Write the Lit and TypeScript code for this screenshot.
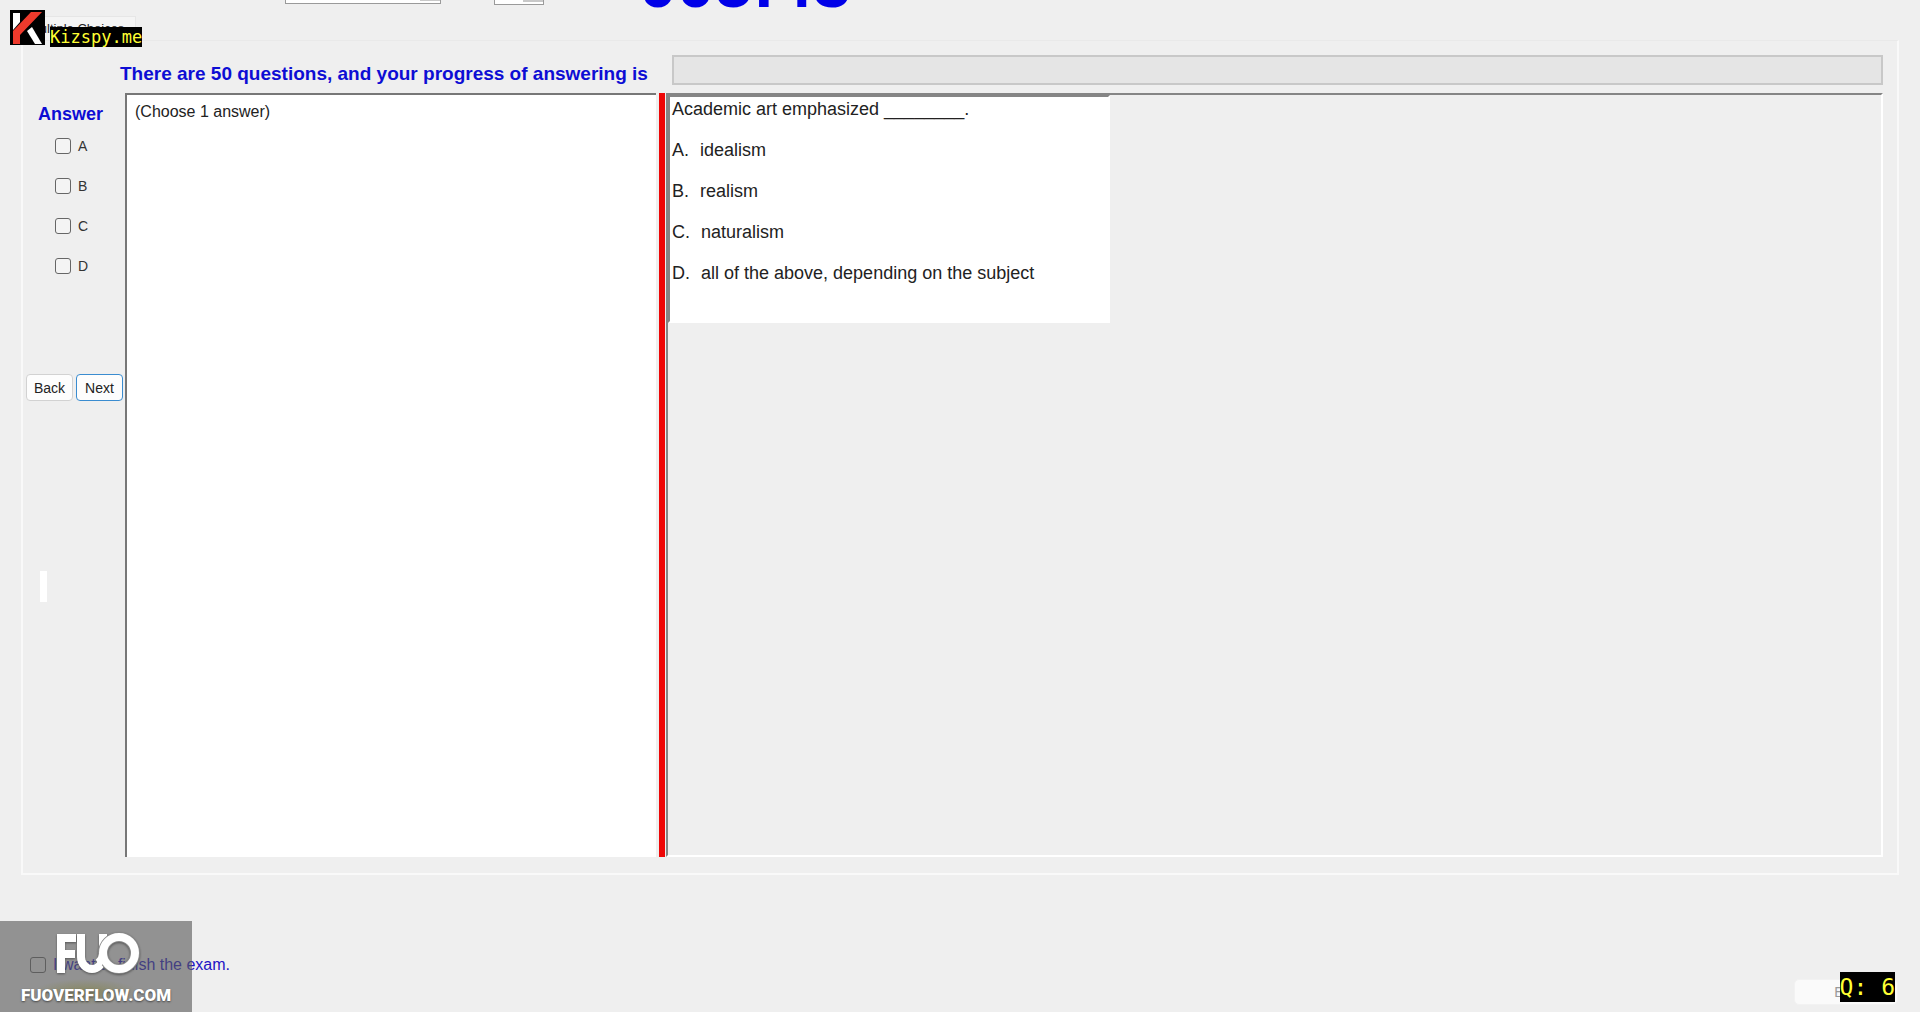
import { LitElement, html, css } from "lit";
import { customElement, state } from "lit/decorators.js";

@customElement("app-root")
export class AppRoot extends LitElement {
  @state() private options = ["A", "B", "C", "D"];
  @state() private choices = [
    ["A.", "idealism"],
    ["B.", "realism"],
    ["C.", "naturalism"],
    ["D.", "all of the above, depending on the subject"],
  ];

  static styles = css`
    * { box-sizing: border-box; }
    :host {
      display: flex;
      flex-direction: column;
      position: relative;
      min-height: 100vh;
      overflow: hidden;
      background: #efefef;
      color: #222;
      font-family: "Liberation Sans", Arial, sans-serif;
      font-size: 16px;
    }
    .top {
      display: flex;
      align-items: flex-end;
      height: 12px;
      padding-left: 285px;
      flex: none;
    }
    .drop {
      appearance: none;
      height: 24px;
      border: 1px solid #9a9a9a;
      border-radius: 0;
      margin: 0 0 8px;
      background: linear-gradient(#c8c8c8, #c8c8c8) right 0 bottom 2px / 20px 20px no-repeat #fff;
    }
    .subject { width: 156px; margin-right: 53px; }
    .size { width: 50px; margin-bottom: 7px; }
    .timer {
      margin-left: 95px;
      font-size: 68px;
      line-height: 64px;
      font-weight: bold;
      color: #0000e8;
      margin-bottom: -3px;
    }
    .tabs { display: flex; height: 28px; padding: 4px 0 0 24px; flex: none; }
    .tab {
      height: 24px;
      width: 112px;
      border: 1px solid #e6e6e6;
      border-bottom: 0;
      background: #f4f4f4;
      padding: 0 0 0 4px;
      font: 13px/22px "Liberation Sans", Arial, sans-serif;
      text-align: left;
      white-space: nowrap;
      color: #222;
    }
    .panel {
      flex: 1;
      margin: 0 21px;
      border: 2px solid #f9f9f9;
      border-top: 1px solid #e9e9e9;
      display: grid;
      grid-template-columns: 102px 1fr;
      grid-template-rows: 52px 1fr;
      padding: 0 14px 16px 0;
    }
    .status { grid-column: 1 / 3; display: flex; padding: 14px 0 8px 97px; gap: 24px; }
    .heading { margin: 0; font-size: 19px; line-height: 38px; font-weight: bold; color: #0d0dd4; white-space: nowrap; }
    .progress { flex: 1; height: 30px; border: 2px solid #c8c8c8; background: #e5e5e5; }
    .side { display: flex; flex-direction: column; align-items: stretch; }
    .side fieldset { border: 0; margin: 0; padding: 9px 0 0 15px; min-width: 0; }
    .side legend { float: left; width: 100%; padding: 0; font-size: 18px; line-height: 24px; font-weight: bold; color: #0d0dd4; }
    .opt { clear: both; display: flex; align-items: center; gap: 7px; height: 40px; padding-left: 17px; font-size: 14px; color: #333; }
    .box {
      appearance: none;
      width: 16px;
      height: 16px;
      margin: 0;
      border: 1px solid #666;
      border-radius: 3px;
      background: #f4f4f4;
      flex: none;
    }
    .finish .box { background: transparent; }
    .nav { display: flex; gap: 3px; padding: 88px 2px 0 3px; }
    .nav button {
      flex: 1;
      height: 27px;
      padding: 0;
      border: 1px solid #d2d2d2;
      border-radius: 4px;
      background: #fdfdfd;
      font: 14px "Liberation Sans", Arial, sans-serif;
      color: #222;
    }
    .nav .next { border-color: #3a8cd0; }
    .mark { width: 7px; height: 31px; margin: 170px 0 0 17px; background: #fff; }
    .split { display: grid; grid-template-columns: 531px 10px 1fr; }
    .note { background: #fff; border: solid #777; border-width: 2px 0 0 2px; padding: 7px 8px; line-height: 20px; }
    .bar { background: #ee0606; margin: 0 1px 0 3px; }
    .right { border: 2px solid; border-color: #858585 #fff #fff #858585; display: flex; align-items: flex-start; }
    .card {
      width: 442px;
      height: 228px;
      border: 2px solid;
      border-color: #858585 #fff #fff #858585;
      background: #fff;
      padding: 0 0 0 2px;
      font-size: 18px;
    }
    .card p { margin: 0; line-height: 25px; }
    .card ol { margin: 0; padding: 0; list-style: none; }
    .card li { padding-top: 16px; line-height: 25px; display: flex; gap: 11px; }
    .foot {
      display: flex;
      justify-content: space-between;
      align-items: flex-start;
      height: 137px;
      padding: 79px 22px 0 30px;
      flex: none;
    }
    .finish { display: flex; gap: 7px; align-items: center; color: #2213c5; font-size: 16px; line-height: 22px; }
    .exit {
      width: 104px;
      height: 26px;
      margin-top: 25px;
      border: 1px solid #f2f2f2;
      border-radius: 5px;
      background: #fafafa;
      color: #999;
      font: 14px "Liberation Sans", Arial, sans-serif;
    }
    .kz { position: absolute; left: 10px; top: 10px; width: 35px; height: 35px; }
    .kzname {
      position: absolute;
      left: 50px;
      top: 27px;
      background: #000;
      color: #ff3;
      font: 17px/20px "DejaVu Sans Mono", monospace;
    }
    .fuo {
      position: absolute;
      left: 0;
      bottom: 0;
      width: 192px;
      height: 91px;
      background:
        radial-gradient(closest-side, rgba(120, 120, 20, 0.4), transparent) 34px 58px / 104px 26px no-repeat,
        rgba(88, 88, 88, 0.62);
    }
    .fuo svg { position: absolute; left: 52px; top: 8px; width: 92px; height: 54px; filter: drop-shadow(0 1px 1px #555); }
    .fuotext {
      position: absolute;
      left: 0;
      right: 0;
      top: 62px;
      text-align: center;
      color: #fff;
      font: 900 17px/24px Roboto, "Liberation Sans", sans-serif;
      text-shadow: 0 1px 2px #444;
    }
    .count {
      position: absolute;
      right: 25px;
      bottom: 10px;
      height: 30px;
      background: #000;
      color: #ff3;
      font: 23px/30px "DejaVu Sans Mono", monospace;
      white-space: pre;
    }
  `;

  render() {
    return html`
      <header class="top">
        <select class="drop subject" aria-label="Font"></select>
        <select class="drop size" aria-label="Size"></select>
        <div class="timer">005:43</div>
      </header>
      <nav class="tabs"><button class="tab">Multiple Choices</button></nav>
      <main class="panel">
        <div class="status">
          <h1 class="heading">There are 50 questions, and your progress of answering is</h1>
          <div class="progress" role="progressbar" aria-valuenow="0" aria-label="Progress"></div>
        </div>
        <aside class="side">
          <fieldset>
            <legend>Answer</legend>
            ${this.options.map((o) => html`<label class="opt"><input class="box" type="checkbox" />${o}</label>`)}
          </fieldset>
          <div class="nav"><button>Back</button><button class="next">Next</button></div>
          <div class="mark"></div>
        </aside>
        <div class="split">
          <section class="note">(Choose 1 answer)</section>
          <div class="bar"></div>
          <section class="right">
            <article class="card">
              <p>Academic art emphasized ________.</p>
              <ol>
                ${this.choices.map(([k, t]) => html`<li><span>${k}</span><span>${t}</span></li>`)}
              </ol>
            </article>
          </section>
        </div>
      </main>
      <footer class="foot">
        <label class="finish"><input class="box" type="checkbox" />I want to finish the exam.</label>
        <button class="exit">Exit</button>
      </footer>
      <svg class="kz" viewBox="0 0 35 35" aria-hidden="true">
        <rect width="35" height="35" fill="#000" />
        <path d="M3 3h7v9l-7 8z" fill="#fff" />
        <path d="M21 2h11L10 25v9H3V21z" fill="#ee3a2c" />
        <path d="M17 21l5-4 10 17h-7z" fill="#fff" />
      </svg>
      <div class="kzname">Kizspy.me</div>
      <div class="fuo">
        <svg viewBox="0 0 92 54" aria-hidden="true">
          <path d="M5 5h19v8H13v8h10v8H13v15H5z" fill="#fff" />
          <path d="M29 5v23a11 12 0 0 0 22 0V5" fill="none" stroke="#fff" stroke-width="8" />
          <circle cx="67" cy="24" r="16" fill="none" stroke="#8a8a8a" stroke-width="10" />
          <path d="M46 34a12 12 0 0 0 5-9" fill="none" stroke="#fff" stroke-width="8" />
          <circle cx="67" cy="24" r="16" fill="none" stroke="#fff" stroke-width="8" />
        </svg>
        <div class="fuotext">FUOVERFLOW.COM</div>
      </div>
      <div class="count">Q: 6</div>
    `;
  }
}
